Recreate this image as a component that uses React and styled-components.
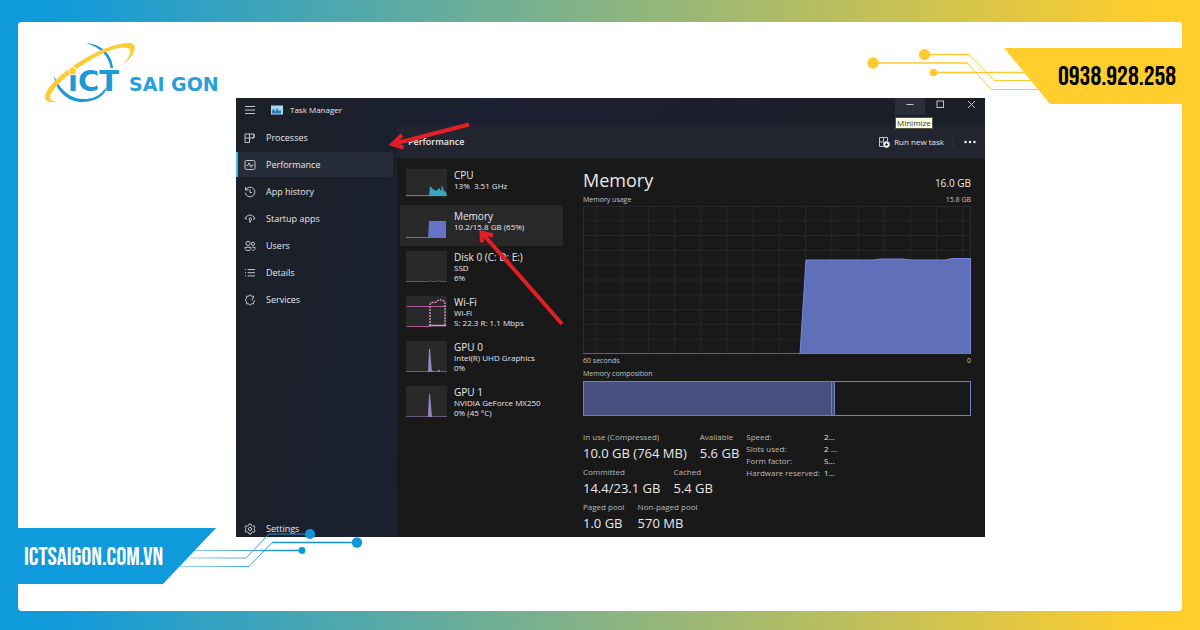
import React from 'react'
import styled, { createGlobalStyle } from 'styled-components'

const navItems = [
  { name: 'Processes', icon: <path d="M1 2h9v4h-9zM1 6v4.5h4.5V2M10 2v2a2 2 0 0 1-2 2" /> },
  { name: 'Performance', active: true, icon: <><rect x="1" y="1.5" width="10" height="9" rx="1.5" /><path d="M2.5 6.5h1.3l1.2-2.7 2 4.5 1-2.3h1.5" /></> },
  { name: 'App history', icon: <path d="M1.5 1v3h3M1.7 4a4.8 4.8 0 1 1-.4 2.6M6 3.5v3h2" /> },
  { name: 'Startup apps', icon: <path d="M1 5.5C3 1 9 1 11 5.500L9 6.500M1 5.500l2 .6M6.200 9.500L5 5.500l1.500-1 1 1.500z" /> },
  { name: 'Users', icon: <><circle cx="4" cy="3.4" r="2.1" /><circle cx="9" cy="3.8" r="1.6" /><path d="M1 7.3h6v1.2c0 2.8-6 2.8-6 0zM8.4 7.3H11v1.2c0 1.5-1.3 2-2.7 1.8" /></> },
  { name: 'Details', icon: <path d="M1 2.5h1M3.7 2.5H11M1 5.7h1M3.7 5.7H11M1 8.9h1M3.7 8.9H11" /> },
  { name: 'Services', icon: <path d="M9.500 4V2.200H7.300C7.100.6 5 .6 4.800 2.200H2.600v2.300C1 4.700 1 7.100 2.600 7.300v2.500h2.200c.2 1.500 2.300 1.500 2.500 0h2.200V8M9.500 4C7.600 3.800 7.400 6 9 6.100M9.500 8c1.500-.3 1.500-1.700.5-1.900" /> },
]

const resources = [
  { name: 'CPU', lines: ['13%  3.51 GHz'], graph: <><path d="M0 26.5h23" stroke="#2f8f9d" /><path d="M23 27l1-10 3 3 3 2 3-3 2 3 1-6 2 6 2 1 1 4z" fill="#35a8bd" /></> },
  { name: 'Memory', lines: ['10.2/15.8 GB (65%)'], active: true, graph: <><path d="M0 27.5h23" stroke="#6574c4" /><path d="M22 28l1-17h17v17z" fill="#6574c4" /></> },
  { name: 'Disk 0 (C: D: E:)', lines: ['SSD', '6%'], graph: <path d="M0 30.5h24l1-1 2 1h4l1-1 3 1h5" stroke="#24706c" fill="none" /> },
  { name: 'Wi-Fi', lines: ['Wi-Fi', 'S: 22.3 R: 1.1 Mbps'], graph: <><path d="M1 10.500h39M1 30.5h23" stroke="#a8609b" /><path d="M24 30V9c1-5 4-1 6-3s5-3 7-1c2-1 2 2 2 5v20" stroke="#dc93d0" strokeWidth="1.400" strokeDasharray="2 1" fill="none" /><path d="M23 29.500h17" stroke="#dc93d0" strokeWidth="1.500" /></> },
  { name: 'GPU 0', lines: ['Intel(R) UHD Graphics', '0%'], graph: <><path d="M0 30.5h41" stroke="#685c7a" /><path d="M22 31l1-23h1l2 23zM26 31l1-2 1 2zM31 31l2-3 1 3z" fill="#9a86c4" /></> },
  { name: 'GPU 1', lines: ['NVIDIA GeForce MX250', '0% (45 °C)'], graph: <><path d="M0 30.5h41" stroke="#685c7a" /><path d="M22 31l1-23h1l2 23z" fill="#9a86c4" /></> },
]

const stats = [
  [['In use (Compressed)', '10.0 GB (764 MB)'], ['Available', '5.6 GB']],
  [['Committed', '14.4/23.1 GB'], ['Cached', '5.4 GB']],
  [['Paged pool', '1.0 GB'], ['Non-paged pool', '570 MB']],
]

const specs = [
  ['Speed:', '2...'],
  ['Slots used:', '2 ...'],
  ['Form factor:', 'S...'],
  ['Hardware reserved:', '1...'],
]

const columns = Array.from({ length: 15 }, (_, i) => 13 + i * 26.2)
const rows = Array.from({ length: 9 }, (_, i) => 14.8 * (i + 1))

function Logo() {
  return (
    <LogoSvg viewBox="44 40 180 64" role="img" aria-label="ICT Sai Gon">
      <path fill="#1b9ad7" d="M86 43C101 44 112 54 113 68h-2.500C109 56 100 47 86 43z" />
      <path fill="#1b9ad7" d="M54 76C56 93 70 103 84 102c12-1 20-6 23-14V87l-2 2c-7 8-13 10-21 10C72 99 61 92 54 76z" />
      <Mark x="68" y="91">iCT</Mark>
      <path fill="#fdcb34" d="M57 101.500C45 104 43 99 47 91 55 75 100 44 128 43c11 0 8 11-5 22 9-11 10-17 1-17.500C105 47 63 75 52 92c-4 7-1 9 5 9.500z" />
      <circle cx="72.500" cy="71" r="4" fill="#fdcb34" stroke="#fff" />
      <Brand x="129" y="91">SAI GON</Brand>
    </LogoSvg>
  )
}

export default function App() {
  return (
    <Frame>
      <Global />
      <Card>
        <Header>
          <Logo />
          <Contact>
            <PhoneCircuit viewBox="866 48 174 56" fill="none" stroke="#fdcb2e" aria-hidden="true">
              <path strokeWidth="1.500" d="M873 63h94M924 54.500h45M933 72.500h94" />
              <path d="M967 63l24.500 26.500H1040M969 54.500l25.500 26H1032" />
              <g fill="#fdcb2e" stroke="none">
                <circle cx="873" cy="63" r="5.700" />
                <circle cx="924.500" cy="54.500" r="5.500" />
                <circle cx="933.500" cy="72.500" r="3.800" />
              </g>
            </PhoneCircuit>
            <Phone href="tel:0938928258">0938.928.258</Phone>
          </Contact>
        </Header>

        <Stage>
          <Window>
            <TitleBar>
              <MenuButton aria-label="Menu">
                <Icon viewBox="0 0 12 12"><path d="M1 2.500h10M1 6h10M1 9.500h10" /></Icon>
              </MenuButton>
              <AppIcon viewBox="0 0 12 9" aria-hidden="true">
                <rect width="12" height="9" fill="#a5dcf4" />
                <path d="M1 8V5l2-2 1 3 1-1 1-3 2 4 1-2 1 2v2z" fill="#2b78b5" />
              </AppIcon>
              <AppName>Task Manager</AppName>
              <Controls>
                <Control aria-label="Minimize" $hover>
                  <Icon viewBox="0 0 12 12"><path d="M2.500 6.500h7" /></Icon>
                  <Tooltip>Minimize</Tooltip>
                </Control>
                <Control aria-label="Maximize">
                  <Icon viewBox="0 0 12 12"><rect x="3" y="3" width="6.500" height="6.500" /></Icon>
                </Control>
                <Control aria-label="Close">
                  <Icon viewBox="0 0 12 12"><path d="M4 3l7 7M11 3l-7 7" /></Icon>
                </Control>
              </Controls>
            </TitleBar>

            <Sidebar>
              {navItems.map((item) => (
                <NavItem key={item.name} $active={item.active}>
                  <Icon viewBox="0 0 12 12">{item.icon}</Icon>
                  {item.name}
                </NavItem>
              ))}
              <SettingsItem>
                <Icon viewBox="0 0 12 12">
                  <path d="M5 1h2l.4 1.500 1.200.7 1.500-.5 1 1.800L10 5.500v1l1.100 1-1 1.800-1.500-.5-1.200.7L7 11H5l-.4-1.500-1.200-.7-1.500.5-1-1.800L2 6.500v-1l-1.100-1 1-1.800 1.500.5 1.200-.7z" />
                  <circle cx="6" cy="6" r="1.600" />
                </Icon>
                Settings
              </SettingsItem>
            </Sidebar>

            <Panel>
              <PanelHeader>
                <PanelTitle>Performance</PanelTitle>
                <TaskButton>
                  <Icon viewBox="0 0 12 12">
                    <path d="M5.500 10.500h-4v-9h8V5M1.500 6h4.500M5.500 1.500v5" />
                    <circle cx="8.500" cy="8.500" r="3" fill="#fff" />
                    <path d="M8.500 7v3M7 8.500h3" stroke="#22252f" />
                  </Icon>
                  Run new task
                </TaskButton>
                <MoreButton aria-label="More options">
                  <Icon viewBox="0 0 12 12">
                    <g fill="#fff" stroke="none">
                      <circle cx="1.500" cy="6" r="1.200" />
                      <circle cx="6" cy="6" r="1.200" />
                      <circle cx="10.500" cy="6" r="1.200" />
                    </g>
                  </Icon>
                </MoreButton>
              </PanelHeader>

              <PanelBody>
                <ResourceList>
                  {resources.map((r) => {
                    const height = r.lines.length > 1 ? 31 : 28
                    return (
                      <Resource key={r.name} $active={r.active} $tall={r.lines.length > 1}>
                        <Thumb viewBox={`0 0 41 ${height}`} $height={height}>{r.graph}</Thumb>
                        <ResourceText>
                          <ResourceName>{r.name}</ResourceName>
                          {r.lines.map((line) => <ResourceLine key={line}>{line}</ResourceLine>)}
                        </ResourceText>
                      </Resource>
                    )
                  })}
                </ResourceList>

                <Details>
                  <Heading>
                    <Title>Memory</Title>
                    <Total>16.0 GB</Total>
                  </Heading>
                  <Caption><span>Memory usage</span><span>15.8 GB</span></Caption>
                  <Chart viewBox="0 0 388 148" preserveAspectRatio="none">
                    <g stroke="#292929">
                      <rect x="0.500" y="0.500" width="387" height="147" fill="none" />
                      {columns.map((x) => <path key={x} d={`M${x} 0v148`} />)}
                      {rows.map((y) => <path key={y} d={`M0 ${y}h388`} />)}
                    </g>
                    <path d="M0 147.500h217" stroke="#5a5f9c" />
                    <path d="M217 148l6-94h67l7-1h23l8 1h34l7-1.500h18.500V148z" fill="#606fb9" stroke="#7886dc" />
                  </Chart>
                  <Caption><span>60 seconds</span><span>0</span></Caption>
                  <Caption><span>Memory composition</span></Caption>
                  <Composition>
                    <InUse />
                    <Modified />
                  </Composition>
                  <Summary>
                    <Stats>
                      {stats.map((row) => (
                        <StatRow key={row[0][0]}>
                          {row.map(([label, value]) => (
                            <div key={label}>
                              <StatLabel>{label}</StatLabel>
                              <StatValue>{value}</StatValue>
                            </div>
                          ))}
                        </StatRow>
                      ))}
                    </Stats>
                    <Specs>
                      <tbody>
                        {specs.map(([label, value]) => (
                          <tr key={label}>
                            <th scope="row">{label}</th>
                            <td>{value}</td>
                          </tr>
                        ))}
                      </tbody>
                    </Specs>
                  </Summary>
                </Details>
              </PanelBody>
            </Panel>

            <Arrows viewBox="0 0 340 240" aria-hidden="true">
              <path d="M233 26.500L157 46M166 37l-9.500 9 11 3.500" />
              <path d="M326 226L246 135M257 137.500l-11.500-3 .5 10" />
            </Arrows>
          </Window>
        </Stage>

        <Footer>
          <Site href="https://ictsaigon.com.vn">ICTSAIGON.COM.VN</Site>
          <SiteCircuit viewBox="180 528 184 56" fill="none" stroke="url(#fade)" aria-hidden="true">
            <defs>
              <linearGradient id="fade" gradientUnits="userSpaceOnUse" x1="180" y1="0" x2="290" y2="0">
                <stop offset="0" stopColor="#9fd6f1" />
                <stop offset="1" stopColor="#1390d2" />
              </linearGradient>
            </defs>
            <path d="M190 558h56l23-24h41M180 566.500h69l23-24h85M195 550.500h107" />
            <path strokeWidth="1.600" d="M272 542.500h85M260 550.500h42" />
            <g fill="#1097da" stroke="none">
              <circle cx="310" cy="534" r="5" />
              <circle cx="357" cy="542.500" r="5.200" />
              <circle cx="302" cy="550.500" r="3.400" />
            </g>
          </SiteCircuit>
        </Footer>
      </Card>
    </Frame>
  )
}

const Global = createGlobalStyle`
  * {
    box-sizing: border-box;
  }
  body {
    margin: 0;
    font-family: "Open Sans", "Noto Sans", sans-serif;
  }
  button {
    border: 0;
    padding: 0;
    background: none;
    color: inherit;
    font: inherit;
    text-align: left;
  }
  svg {
    display: block;
    flex-shrink: 0;
  }
`;
const Frame = styled.div`
  min-height: 100vh;
  display: flex;
  padding: 22px 18px 19px;
  background: linear-gradient(90deg, #0f9adc 4%, #ffcd2c 96%);
`;
const Card = styled.main`
  flex: 1;
  background: #fff;
  border-radius: 4px;
`;
const Header = styled.header`
  display: flex;
  justify-content: space-between;
  padding: 18px 0 0 26px;
`;
const LogoSvg = styled.svg`
  width: 180px;
  height: 64px;
`;
const Mark = styled.text`
  font-family: "DejaVu Sans", sans-serif;
  font-size: 29px;
  font-weight: 700;
  fill: #1b9ad7;
`;
const Brand = styled.text`
  font-family: "DejaVu Sans", sans-serif;
  font-size: 19px;
  font-weight: 700;
  fill: #2a9fdc;
`;
const Contact = styled.div`
  display: flex;
  padding-top: 8px;
`;
const PhoneCircuit = styled.svg`
  width: 174px;
  height: 56px;
  margin-right: -36px;
`;
const Banner = styled.a`
  display: flex;
  align-items: center;
  height: 56px;
  padding-top: 2px;
  font-family: "Bebas Neue", "Roboto Condensed", "Open Sans Condensed", "Liberation Sans", sans-serif;
  text-decoration: none;
`;
const Phone = styled(Banner)`
  width: 178px;
  padding-left: 54px;
  background: #ffcd2c;
  color: #000;
  font-size: 27px;
  clip-path: polygon(0 0, 100% 0, 100% 100%, 46px 100%);
`;
const Stage = styled.div`
  display: grid;
  grid-template-columns: 218fr 749fr 197fr;
  margin-top: -6px;
`;
const Window = styled.section`
  position: relative;
  grid-column: 2;
  display: grid;
  grid-template-columns: 161px 1fr;
  grid-template-rows: 27px 1fr;
  min-height: 439px;
  background: linear-gradient(100deg, #1c2027 0, #1b2032 30%, #1b1f2c 60%, #1c1f26 100%);
  color: #e8e8ea;
  font-size: 9px;
  line-height: 12px;
`;
const TitleBar = styled.div`
  grid-column: 1 / -1;
  display: flex;
  padding-left: 8px;
`;
const Icon = styled.svg`
  width: 12px;
  height: 12px;
  fill: none;
  stroke: #c4c6cc;
`;
const MenuButton = styled.button`
  height: 24px;
  margin-right: 15px;
`;
const AppIcon = styled.svg`
  width: 12px;
  height: 24px;
  margin-right: 7px;
`;
const AppName = styled.span`
  line-height: 24px;
  font-size: 8px;
`;
const Controls = styled.div`
  display: flex;
  margin-left: auto;
`;
const Control = styled.button`
  position: relative;
  display: flex;
  justify-content: center;
  width: 30px;
  height: 17px;
  background: ${(p) => (p.$hover ? '#292e39' : 'none')};
`;
const Tooltip = styled.span`
  position: absolute;
  top: 19px;
  left: 0;
  padding: 0 1px;
  border: 1px solid #55554b;
  background: #ffffe6;
  color: #333;
  font-size: 8px;
  line-height: 10px;
`;
const Sidebar = styled.nav`
  display: flex;
  flex-direction: column;
  gap: 2px;
  padding-right: 4px;
`;
const NavItem = styled.button`
  display: flex;
  align-items: center;
  gap: 10px;
  height: 25px;
  padding-left: 6px;
  border-left: 2px solid ${(p) => (p.$active ? '#4fb5e8' : 'transparent')};
  border-radius: 0 3px 3px 0;
  background: ${(p) => (p.$active ? '#262c38' : 'none')};
`;
const SettingsItem = styled(NavItem)`
  height: 17px;
  margin-top: auto;
`;
const Panel = styled.div`
  display: flex;
  flex-direction: column;
  background: #191919;
  border-radius: 4px 0 0 0;
`;
const PanelHeader = styled.div`
  display: flex;
  align-items: center;
  height: 33px;
  padding: 0 9px 0 11px;
  border-radius: 4px 0 0 0;
  background: #22252f;
`;
const PanelTitle = styled.h2`
  margin: 0 auto 0 0;
  font-size: 9px;
  font-weight: 600;
`;
const TaskButton = styled.button`
  display: flex;
  align-items: center;
  gap: 4px;
  padding-right: 9px;
  border-right: 1px solid #30333d;
  font-size: 8px;
`;
const MoreButton = styled.button`
  padding-left: 10px;
`;
const PanelBody = styled.div`
  flex: 1;
  display: flex;
  gap: 20px;
  padding: 6px 14px 0 3px;
`;
const ResourceList = styled.div`
  width: 163px;
`;
const Resource = styled.button`
  display: flex;
  gap: 7px;
  width: 100%;
  height: ${(p) => (p.$tall ? '45px' : '41px')};
  padding: 5px 6px;
  background: ${(p) => (p.$active ? '#282828' : 'none')};
`;
const Thumb = styled.svg`
  width: 41px;
  height: ${(p) => p.$height}px;
  background: #292929;
`;
const ResourceText = styled.span`
  display: flex;
  flex-direction: column;
  white-space: pre;
`;
const ResourceName = styled.span`
  font-size: 10px;
  line-height: 12px;
`;
const ResourceLine = styled.span`
  font-size: 8px;
  line-height: 10px;
`;
const Details = styled.div`
  flex: 1;
`;
const Heading = styled.div`
  display: flex;
  justify-content: space-between;
  align-items: baseline;
  padding-top: 3px;
`;
const Title = styled.h1`
  margin: 0;
  font-size: 18px;
  font-weight: 400;
  line-height: 26px;
`;
const Total = styled.span`
  font-size: 10px;
`;
const Caption = styled.div`
  display: flex;
  justify-content: space-between;
  color: #c4c4c4;
  font-size: 7px;
  line-height: 13px;
`;
const Chart = styled.svg`
  width: 100%;
  height: 148px;
`;
const Composition = styled.div`
  display: flex;
  height: 35px;
  margin-top: 1px;
  border: 1px solid #7080c4;
`;
const InUse = styled.div`
  width: 64%;
  background: #47507f;
`;
const Modified = styled.div`
  width: 4px;
  border: 1px solid #7080c4;
  border-width: 0 1px;
  background: #47507f;
`;
const Summary = styled.div`
  display: flex;
  gap: 7px;
  padding-top: 15px;
`;
const Stats = styled.div`
  display: flex;
  flex-direction: column;
  gap: 3px;
`;
const StatRow = styled.div`
  display: flex;
  gap: 13px;
`;
const StatLabel = styled.div`
  color: #b9b9b9;
  font-size: 8px;
  line-height: 12px;
`;
const StatValue = styled.div`
  font-size: 13px;
  line-height: 20px;
`;
const Specs = styled.table`
  align-self: flex-start;
  border-collapse: collapse;
  color: #b9b9b9;
  font-size: 8px;
  line-height: 12px;
  th {
    padding: 0 4px 0 0;
    font-weight: 400;
    text-align: left;
  }
  td {
    padding: 0;
    color: #e8e8ea;
  }
`;
const Arrows = styled.svg`
  position: absolute;
  top: 0;
  left: 0;
  width: 340px;
  height: 240px;
  fill: none;
  stroke: #e21f26;
  stroke-width: 4;
  pointer-events: none;
`;
const Footer = styled.footer`
  position: relative;
  display: flex;
  margin-top: -9px;
`;
const Site = styled(Banner)`
  width: 198px;
  padding-left: 6px;
  background: #0f9adb;
  color: #fff;
  font-size: 25px;
  clip-path: polygon(0 0, 100% 0, 145px 100%, 0 100%);
`;
const SiteCircuit = styled.svg`
  width: 184px;
  height: 56px;
  margin-left: -36px;
`;
